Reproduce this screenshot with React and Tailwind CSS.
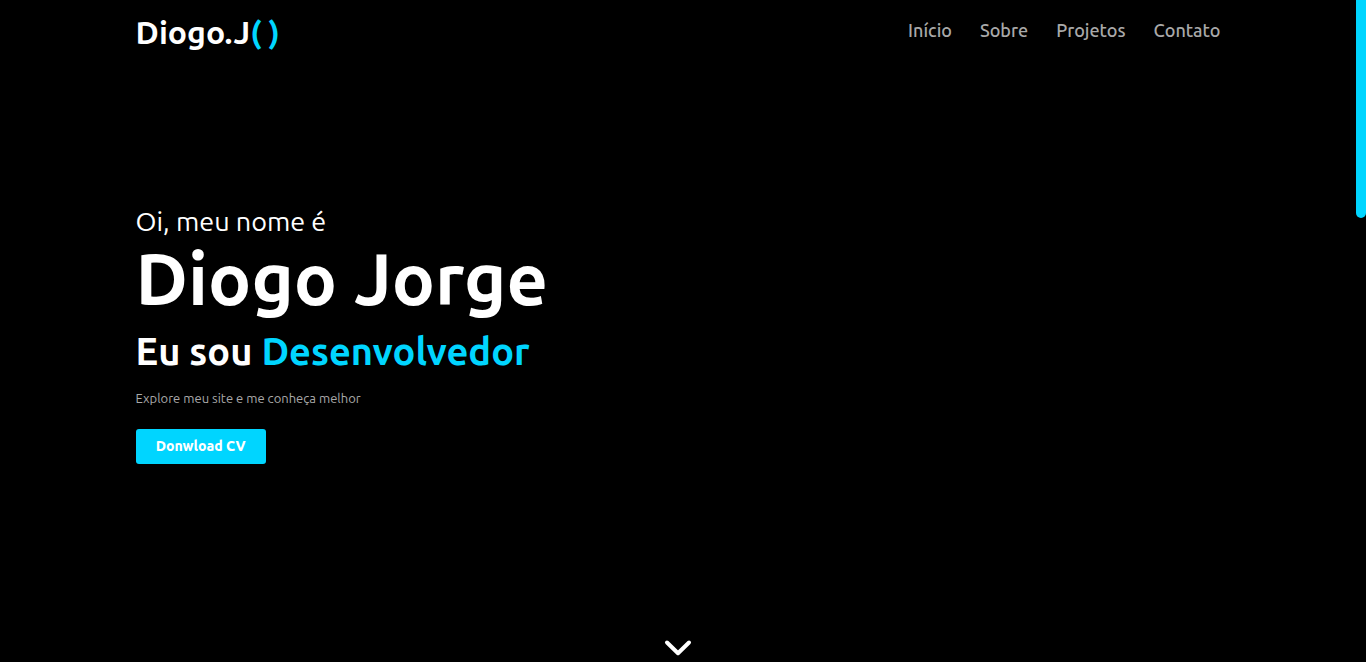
import React from "react";

const links = [
  { label: "Início", href: "#inicio" },
  { label: "Sobre", href: "#sobre" },
  { label: "Projetos", href: "#projetos" },
  { label: "Contato", href: "#contato" },
];

function Header() {
  return (
    <header className="flex items-start justify-between px-[10%] pt-3">
      <a href="#inicio" className="text-[32px] leading-[40px] font-semibold text-white">
        Diogo.J<span className="text-[#00d5ff]">( )</span>
      </a>
      <nav className="flex gap-7 pt-1">
        {links.map((link) => (
          <a key={link.href} href={link.href} className="text-[18px] leading-[28px] font-medium text-[#a9a9a9]">
            {link.label}
          </a>
        ))}
      </nav>
    </header>
  );
}

function Hero() {
  return (
    <section id="inicio" className="flex flex-1 flex-col items-start justify-center px-[10%] pb-6">
      <p className="text-[27px] leading-[36px] text-white">Oi, meu nome é</p>
      <h1 className="text-[72px] leading-[80px] font-semibold text-white">Diogo Jorge</h1>
      <h2 className="mt-1 text-[38px] leading-[56px] font-semibold text-white">
        Eu sou <span className="text-[#00d5ff]">Desenvolvedor</span>
      </h2>
      <p className="mt-2 text-[13px] leading-[22px] text-[#a9a9a9]">Explore meu site e me conheça melhor</p>
      <button type="button" className="mt-5 h-[35px] w-[130px] rounded-[3px] bg-[#00d5ff] text-[14px] font-extrabold text-white">
        Donwload CV
      </button>
    </section>
  );
}

export default function App() {
  return (
    <div className="flex min-h-screen bg-black font-['Ubuntu','Noto_Sans',sans-serif]">
      <main className="flex min-w-0 flex-1 flex-col">
        <Header />
        <Hero />
        <a href="#sobre" aria-label="Sobre" className="mb-1 self-center">
          <svg width="28" height="20" viewBox="0 0 28 20" fill="none" stroke="white" strokeWidth="4" strokeLinecap="round" strokeLinejoin="round">
            <path d="M3 4.5 L14 15.2 L25 4.5" />
          </svg>
        </a>
      </main>
      <div className="h-[218px] w-[10px] rounded-b-[5px] bg-[#00d5ff]" />
    </div>
  );
}
